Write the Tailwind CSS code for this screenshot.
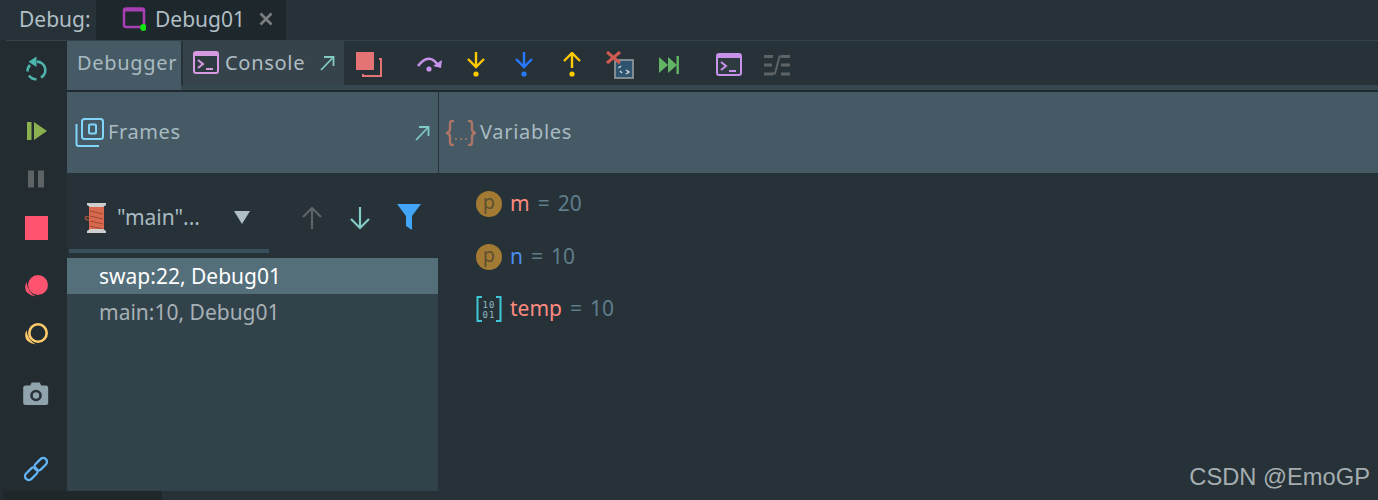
<!DOCTYPE html>
<html><head><meta charset="utf-8"><script src="https://cdn.jsdelivr.net/npm/@tailwindcss/browser@4"></script></head>
<body class="m-0">
<div class="relative w-[1378px] h-[500px] overflow-hidden bg-[#263238] flex flex-col font-['Noto_Sans','Open_Sans',sans-serif] text-[#b0bec5]">
  <!-- title bar -->
  <div class="h-[40px] flex items-stretch shrink-0">
    <div class="w-[96px] pl-[19px] pt-[4px] text-[21px] leading-[30px] text-[#b0bec5]">Debug:</div>
    <div class="w-[190px] bg-[#1e272c] flex items-center pl-[26px] pb-[3px]">
      <svg width="24" height="24" viewBox="0 0 24 24" class="mr-[9px] shrink-0"><rect x="2" y="1.5" width="20" height="18.5" rx="2" fill="none" stroke="#a83fb5" stroke-width="2.5"/><rect x="2" y="1.5" width="20" height="3" fill="#a83fb5"/><circle cx="21.5" cy="20.5" r="3.4" fill="#0fe30f"/></svg>
      <span class="text-[21px] leading-[30px] text-[#b0bec5]">Debug01</span>
      <svg width="14" height="14" viewBox="0 0 14 14" class="ml-[14px] shrink-0"><path d="M1.5 1.5L12.5 12.5M12.5 1.5L1.5 12.5" stroke="#7c7f80" stroke-width="2.6"/></svg>
    </div>
  </div>
  <div class="flex-1 flex min-h-0">
    <div class="w-[6px] bg-[#232c31] shrink-0"></div>
    <div class="flex-1 flex flex-col border-t border-[#33434c] min-w-0">
      <div class="flex-1 flex min-h-0">
        <!-- sidebar -->
        <div class="w-[61px] bg-[#232c31] relative shrink-0">
          <svg class="absolute left-[18px] top-[15px]" width="24" height="26" viewBox="0 0 24 26" fill="none"><path d="M13 5.6A8.5 8.5 0 0 1 17 21.5" stroke="#4db6ac" stroke-width="2.6"/><path d="M12.5 23.2A8.5 8.5 0 0 1 5 19.5" stroke="#4db6ac" stroke-width="2.6"/><path d="M3.6 15.5A8.5 8.5 0 0 1 6 9" stroke="#4db6ac" stroke-width="2.6"/><path d="M12.5 0.5V11L4.5 5.7Z" fill="#4db6ac"/></svg>
          <svg class="absolute left-[20px] top-[80px]" width="22" height="20" viewBox="0 0 22 20"><rect x="1" y="1" width="4.5" height="18" fill="#8bb04f"/><path d="M8 1L21 10L8 19Z" fill="#8bb04f"/></svg>
          <svg class="absolute left-[21px] top-[129px]" width="18" height="18" viewBox="0 0 18 18"><rect x="1" y="0.5" width="6" height="17" fill="#5e6466"/><rect x="11" y="0.5" width="6" height="17" fill="#5e6466"/></svg>
          <div class="absolute left-[19px] top-[175px] w-[23px] h-[24px] bg-[#ff5370]"></div>
          <svg class="absolute left-[17px] top-[233px]" width="28" height="26" viewBox="0 0 28 26"><circle cx="15" cy="11" r="10" fill="#ff5370"/><path d="M3.4 8Q-1.5 20 13 22.5Q5 19 3.4 8Z" fill="#ff5370"/></svg>
          <svg class="absolute left-[17px] top-[281px]" width="28" height="26" viewBox="0 0 28 26" fill="none"><circle cx="15" cy="11" r="8.7" stroke="#ffcb6b" stroke-width="2.6"/><path d="M3.4 8Q-1.5 20 13 22.5Q5 19 3.4 8Z" fill="#ffcb6b"/></svg>
          <svg class="absolute left-[17px] top-[341px]" width="26" height="24" viewBox="0 0 26 24"><path d="M3 4H7.5L9 1H17L18.5 4H23Q25.5 4 25.5 6.5V21Q25.5 23.5 23 23.5H3Q.5 23.5 .5 21V6.5Q.5 4 3 4Z" transform="translate(-.3 -.5)" fill="#90a4ae"/><circle cx="13" cy="13.5" r="4.5" fill="none" stroke="#263238" stroke-width="2.6"/></svg>
          <svg class="absolute left-[17px] top-[415px]" width="26" height="26" viewBox="0 0 26 26" fill="none" stroke="#64b5f6" stroke-width="2.3"><rect x="-3.8" y="-9" width="7.6" height="14.5" rx="3.8" transform="translate(16.5 9.5) rotate(45)"/><rect x="-3.8" y="-5.5" width="7.6" height="14.5" rx="3.8" transform="translate(9.5 16.5) rotate(45)"/></svg>
        </div>
        <!-- main -->
        <div class="flex-1 flex flex-col min-w-0">
          <!-- toolbar -->
          <div class="h-[44px] flex items-stretch shrink-0">
            <div class="w-[116px] bg-[#455a64] flex items-center pl-[10px] text-[20px] tracking-[0.7px] text-[#a9bac2] border-r-[2px] border-[#263238] shrink-0">Debugger</div>
            <div class="w-[161px] bg-[#36434a] flex items-center pl-[10px] text-[20px] tracking-[0.7px] text-[#b0bec5] shrink-0">
              <svg width="26" height="24" viewBox="0 0 26 24" class="mr-[6px] shrink-0"><rect x="1" y="1" width="24" height="21" rx="2" fill="#2d3a40" stroke="#d59ae0" stroke-width="2"/><rect x="1" y="1" width="24" height="4" fill="#d59ae0"/><path d="M5 9L10 13L5 17" fill="none" stroke="#d59ae0" stroke-width="2"/><path d="M13 18H20" stroke="#d59ae0" stroke-width="2"/></svg>
              <span>Console</span>
              <svg width="16" height="16" viewBox="0 0 16 16" class="ml-[14px] shrink-0" fill="none" stroke="#80cbc4" stroke-width="1.8"><path d="M2 15L14.5 2"/><path d="M5 2H14.5V11"/></svg>
            </div>
            <div class="flex items-center flex-1 bg-[#263238] pt-[4px]">
              <svg class="ml-[11px] shrink-0" width="28" height="28" viewBox="0 0 28 28"><path d="M25 9H27V26H9V24" transform="translate(-1 -1)" fill="none" stroke="#e57373" stroke-width="2"/><rect x="1" y="1" width="18" height="18" fill="#e57373"/></svg>
              <svg class="ml-[33px] shrink-0" width="27" height="20" viewBox="0 0 27 20"><path d="M2 11Q13 -3 22 10" fill="none" stroke="#c792ea" stroke-width="2.6"/><path d="M26 5L25 13L17 11Z" fill="#c792ea"/><circle cx="13" cy="14" r="2.6" fill="#c792ea"/></svg>
              <svg class="ml-[24px] shrink-0" width="18" height="26" viewBox="0 0 18 26"><path d="M9 0V14M1 7L9 15L17 7" fill="none" stroke="#ffcb00" stroke-width="2.4"/><circle cx="9" cy="22" r="2.6" fill="#ffcb00"/></svg>
              <svg class="ml-[30px] shrink-0" width="18" height="26" viewBox="0 0 18 26"><path d="M9 0V14M1 7L9 15L17 7" fill="none" stroke="#2979ff" stroke-width="2.4"/><circle cx="9" cy="22" r="2.6" fill="#2979ff"/></svg>
              <svg class="ml-[30px] shrink-0" width="18" height="26" viewBox="0 0 18 26"><path d="M9 16V2M1 9L9 1L17 9" fill="none" stroke="#ffcb00" stroke-width="2.4"/><circle cx="9" cy="22" r="2.6" fill="#ffcb00"/></svg>
              <svg class="ml-[25px] shrink-0" width="28" height="29" viewBox="0 0 28 29"><rect x="9" y="9" width="18" height="18" fill="#2f5470" stroke="#8b9497" stroke-width="1.8"/><path d="M15 15L12.5 17M20 19L23 21L20 23M16 22L14 20" fill="none" stroke="#cfd8dc" stroke-width="1.4"/><path d="M1 1L14 12M14 1L1 12" stroke="#cf5b52" stroke-width="3"/></svg>
              <svg class="ml-[24px] shrink-0" width="22" height="18" viewBox="0 0 22 18"><path d="M1 1L10 9L1 17ZM10 1L19 9L10 17Z" fill="#62b565"/><rect x="18.5" y="0" width="2.4" height="18" fill="#62b565"/></svg>
              <svg class="ml-[36px] shrink-0" width="26" height="24" viewBox="0 0 26 24"><rect x="1" y="1" width="24" height="21" rx="2" fill="#2d3a40" stroke="#c792ea" stroke-width="2"/><rect x="1" y="1" width="24" height="4" fill="#c792ea"/><path d="M5 9L10 13L5 17" fill="none" stroke="#c792ea" stroke-width="2"/><path d="M13 18H20" stroke="#c792ea" stroke-width="2"/></svg>
              <svg class="ml-[21px] shrink-0" width="28" height="24" viewBox="0 0 28 24" fill="none" stroke="#5e6466" stroke-width="3"><path d="M1 3.5H10M1 12H9M1 21H10"/><path d="M18 3.5H27M18 12H27M18 21H27"/><path d="M19 3.5H16.5L12 20.5H9" stroke-width="2"/></svg>
            </div>
          </div>
          <div class="h-[5px] shrink-0 flex"><div class="w-[114px] bg-[#455a64]"></div><div class="flex-1 bg-[#37474f]"></div></div>
          <div class="h-[2px] bg-[#1f292e] shrink-0"></div>
          <!-- headers -->
          <div class="h-[82px] bg-[#455a64] flex shrink-0 border-b border-[#263238]">
            <div class="w-[372px] flex items-center pl-[8px] border-r border-[#263238] relative shrink-0">
              <svg width="29" height="29" viewBox="0 0 29 29" fill="none" stroke="#81d4fa" stroke-width="2" class="mr-[4px] shrink-0"><rect x="7" y="1" width="21" height="20" rx="2.5"/><path d="M1.5 6V26Q1.5 28 3.5 28H24"/><rect x="14" y="6.5" width="7" height="9" rx="1" stroke-width="2"/></svg>
              <span class="text-[20px] tracking-[0.6px] text-[#a9bac2] pb-[2px]">Frames</span>
              <svg width="16" height="16" viewBox="0 0 16 16" class="absolute right-[8px] top-[33px]" fill="none" stroke="#80cbc4" stroke-width="1.8"><path d="M2 15L14.5 2"/><path d="M5 2H14.5V11"/></svg>
            </div>
            <div class="flex items-center pl-[7px]">
              <svg width="30" height="26" viewBox="0 0 30 26" fill="none" stroke="#ad7568" stroke-width="2.4" class="mr-[4px] shrink-0"><path d="M8 1H6Q4 1 4 4V9Q4 12 1 13Q4 14 4 17V22Q4 25 6 25H8M22 1H24Q26 1 26 4V9Q26 12 29 13Q26 14 26 17V22Q26 25 24 25H22"/><path d="M9 19H11M14 19H16M19 19H21" stroke-width="1.6"/></svg>
              <span class="text-[20px] tracking-[0.7px] text-[#a9bac2] pb-[2px]">Variables</span>
            </div>
          </div>
          <!-- panes -->
          <div class="flex-1 flex min-h-0">
            <div class="w-[371px] flex flex-col shrink-0">
              <div class="h-[84px] bg-[#263238] relative shrink-0 flex items-center pl-[17px] pt-[3px]">
                <svg width="24" height="30" viewBox="0 0 24 30" class="shrink-0"><rect x="5" y="3" width="15" height="24" fill="#d9694e"/><path d="M6 8L19 11M6 13L19 16M6 18L19 21M6 23L19 26" stroke="#9c4936" stroke-width="1"/><path d="M3 0H22V2L19 4H6L3 2ZM3 30H22V28L19 26H6L3 28Z" fill="#cfcfcf"/><path d="M5 14C0 12 0 17 5 17" fill="none" stroke="#b3563f" stroke-width="1.2"/></svg>
                <span class="ml-[9px] text-[21px] text-[#a9bac2]">"main"...</span>
                <svg class="ml-[34px] shrink-0" width="16" height="13" viewBox="0 0 16 13"><path d="M0 0H16L8 13Z" fill="#b0bec5"/></svg>
                <svg class="ml-[51px] shrink-0" width="22" height="24" viewBox="0 0 22 24" fill="none" stroke="#5e6466" stroke-width="2.2"><path d="M11 23V2M2 11L11 2L20 11"/></svg>
                <svg class="ml-[26px] shrink-0" width="22" height="24" viewBox="0 0 22 24" fill="none" stroke="#80cbc4" stroke-width="2.2"><path d="M11 1V22M2 13L11 22L20 13"/></svg>
                <svg class="ml-[26px] shrink-0" width="24" height="27" viewBox="0 0 24 27"><path d="M0 0H24L15 12V26L9 22V12Z" fill="#42a5f5"/></svg>
                <div class="absolute left-[2px] top-[75px] w-[200px] h-[4px] bg-[#37505c]"></div>
              </div>
              <div class="flex-1 bg-[#32424b] text-[21px]">
                <div class="h-[36px] bg-[#546e7a] text-white pl-[32px] leading-[36px]">swap:22, Debug01</div>
                <div class="h-[36px] text-[#a6b0b5] pl-[32px] leading-[36px]">main:10, Debug01</div>
              </div>
            </div>
            <div class="flex-1 pl-[38px] pt-[4px] text-[21px] flex flex-col">
              <div class="h-[52px] flex items-center"><span class="w-[26px] h-[26px] rounded-full bg-[#a37a34] text-[#5d5230] text-[20px] leading-[22px] text-center shrink-0">p</span><span class="ml-[8px] text-[#ff8a80]">m</span><span class="ml-[8px] text-[#607d8b]">=</span><span class="ml-[8px] text-[#607d8b]">20</span></div>
              <div class="h-[53px] flex items-center"><span class="w-[26px] h-[26px] rounded-full bg-[#a37a34] text-[#5d5230] text-[20px] leading-[22px] text-center shrink-0">p</span><span class="ml-[8px] text-[#4b8ef0]">n</span><span class="ml-[8px] text-[#607d8b]">=</span><span class="ml-[8px] text-[#607d8b]">10</span></div>
              <div class="h-[52px] flex items-center">
                <svg width="26" height="26" viewBox="0 0 26 26" class="shrink-0"><path d="M6 1H1.5V25H6M20 1H24.5V25H20" fill="none" stroke="#3fc6d8" stroke-width="2"/><text x="13" y="11.5" text-anchor="middle" font-size="9" font-family="DejaVu Sans Mono" fill="#8fb9c4" letter-spacing="1">10</text><text x="13" y="22" text-anchor="middle" font-size="9" font-family="DejaVu Sans Mono" fill="#8fb9c4" letter-spacing="1">01</text></svg>
                <span class="ml-[8px] text-[#ff8a80]">temp</span><span class="ml-[8px] text-[#607d8b]">=</span><span class="ml-[8px] text-[#607d8b]">10</span>
              </div>
            </div>
          </div>
        </div>
      </div>
      <div class="h-[9px] shrink-0 -ml-[3px]"><div class="w-[159px] h-full bg-[#1f272b]"></div></div>
    </div>
  </div>
  <div class="absolute right-[8px] bottom-[9px] text-[23.7px] leading-[28px] font-['Liberation_Sans'] text-[#a5adb1]">CSDN @EmoGP</div>
</div>
</body></html>
